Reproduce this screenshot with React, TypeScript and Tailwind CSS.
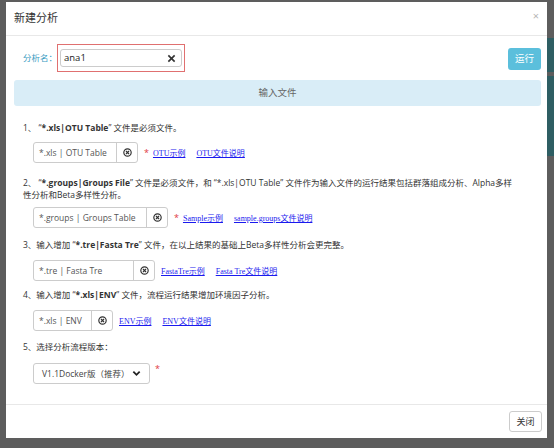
import React from "react";

const font = "font-['Open_Sans','Noto_Sans_CJK_SC',sans-serif]";
const linkFont = "font-['Liberation_Serif','Noto_Sans_CJK_SC',serif]";

function ClearCircle() {
    return (
        <svg width="9" height="9" viewBox="0 0 10 10" fill="none" stroke="#333" strokeWidth="1.3">
            <circle cx="5" cy="5" r="4.1" />
            <path d="M3.3 3.3 L6.7 6.7 M6.7 3.3 L3.3 6.7" />
        </svg>
    );
}

function FileGroup({ label, inputW, star, links }: { label: string; inputW: string; star?: boolean; links: string[] }) {
    return (
        <div className="flex items-center">
            <div className="flex h-[21px] border border-[#ccc] rounded-[3px] bg-white">
                <div className={`${inputW} flex items-center pl-[5px] text-[8.5px] text-[#555] whitespace-nowrap overflow-hidden`}>{label}</div>
                <div className="w-[21px] flex items-center justify-center border-l border-[#ccc]">
                    <ClearCircle />
                </div>
            </div>
            {star ? <span className="ml-[6px] text-[9px] text-[#e0393e]">*</span> : null}
            <div className={`flex gap-[11px] ${star ? "ml-[4px]" : "ml-[6px]"} mt-[3px]`}>
                {links.map((l) => (
                    <a key={l} href="#" className={`${linkFont} text-[8px] text-[#1a1aee] underline whitespace-nowrap`}>
                        {l}
                    </a>
                ))}
            </div>
        </div>
    );
}

export default function App() {
    return (
        <div className={`${font} w-[554px] h-[448px] bg-[#5d5d5d] flex text-[#333]`}>
            <div className="ml-[6px] mt-[2px] w-[541px] h-[436px] bg-white flex flex-col">
                {/* header */}
                <div className="h-[34px] shrink-0 border-b border-[#e8e8e8] flex items-center justify-between pl-[8px] pr-[8px]">
                    <span className="text-[11px] text-[#333]">新建分析</span>
                    <span className="text-[11px] text-[#b5b5b5] -mt-[5px]">×</span>
                </div>

                {/* body */}
                <div className="flex-1 pl-[8px] pr-[6px] text-[8.5px] leading-[12px]">
                    <div className="mt-[8px] flex items-center justify-between">
                        <div className="flex items-center pl-[9px]">
                            <span className="text-[8.5px] text-[#3a9cc2] w-[34px]">分析名：</span>
                            <div className="w-[128px] h-[28px] border border-[#e07070] px-[2px] py-[4px]">
                                <div className="h-full border border-[#ccc] rounded-[3px] flex items-center justify-between pl-[3px] pr-[5px]">
                                    <span className="text-[9.5px] text-[#222]">ana1</span>
                                    <svg width="9" height="9" viewBox="0 0 10 10" stroke="#333" strokeWidth="1.8">
                                        <path d="M1.5 1.5 L8.5 8.5 M8.5 1.5 L1.5 8.5" />
                                    </svg>
                                </div>
                            </div>
                        </div>
                        <button className="w-[33px] h-[22px] mt-[2px] bg-[#5bbfdc] rounded-[3px] text-white text-[9.5px]">运行</button>
                    </div>

                    <div className="mt-[8px] h-[26px] bg-[#d9edf7] rounded-[3px] flex items-center justify-center text-[9.5px] text-[#666]">
                        输入文件
                    </div>

                    <div className="pl-[9px]">
                        <div className="mt-[16px]">
                            1、 “<b>*.xls|OTU Table</b>” 文件是必须文件。
                        </div>
                        <div className="mt-[8px] pl-[10px]">
                            <FileGroup label="*.xls | OTU Table" inputW="w-[82px]" star links={["OTU示例", "OTU文件说明"]} />
                        </div>

                        <div className="mt-[14px]">
                            2、 “<b>*.groups|Groups File</b>” 文件是必须文件，和 “*.xls|OTU Table” 文件作为输入文件的运行结果包括群落组成分析、Alpha多样
                            <br />
                            性分析和Beta多样性分析。
                        </div>
                        <div className="mt-[6px] pl-[10px]">
                            <FileGroup label="*.groups | Groups Table" inputW="w-[112px]" star links={["Sample示例", "sample.groups文件说明"]} />
                        </div>

                        <div className="mt-[11px]">
                            3、输入增加 “<b>*.tre|Fasta Tre</b>” 文件，在以上结果的基础上Beta多样性分析会更完整。
                        </div>
                        <div className="mt-[9px] pl-[10px]">
                            <FileGroup label="*.tre | Fasta Tre" inputW="w-[99px]" links={["FastaTre示例", "Fasta Tre文件说明"]} />
                        </div>

                        <div className="mt-[8px]">
                            4、输入增加 “<b>*.xls|ENV</b>” 文件，流程运行结果增加环境因子分析。
                        </div>
                        <div className="mt-[9px] pl-[10px]">
                            <FileGroup label="*.xls | ENV" inputW="w-[57px]" links={["ENV示例", "ENV文件说明"]} />
                        </div>

                        <div className="mt-[10px]">5、选择分析流程版本：</div>
                        <div className="mt-[10px] pl-[10px] flex items-start">
                            <div className="w-[117px] h-[21px] border border-[#ccc] rounded-[3px] flex items-center justify-between pl-[8px] pr-[8px] text-[8.5px] text-[#444] whitespace-nowrap">
                                <span>V1.1Docker版（推荐）</span>
                                <svg width="9" height="7" viewBox="0 0 10 7" fill="none" stroke="#222" strokeWidth="2">
                                    <path d="M1.5 1.5 L5 5 L8.5 1.5" />
                                </svg>
                            </div>
                            <span className="ml-[5px] text-[9px] text-[#e0393e]">*</span>
                        </div>
                    </div>
                </div>

                {/* footer */}
                <div className="h-[34px] shrink-0 border-t border-[#e8e8e8] flex items-center justify-end pr-[5px]">
                    <button className="w-[33px] h-[21px] border border-[#ccc] rounded-[3px] bg-white text-[9px] text-[#333]">关闭</button>
                </div>
            </div>
            <div className="flex-1 flex flex-col">
                <div className="h-[38px]" />
                <div className="h-[34px] bg-[#2e5e63]" />
                <div className="h-[4px]" />
                <div className="h-[80px] bg-[#2e5e63]" />
            </div>
        </div>
    );
}
